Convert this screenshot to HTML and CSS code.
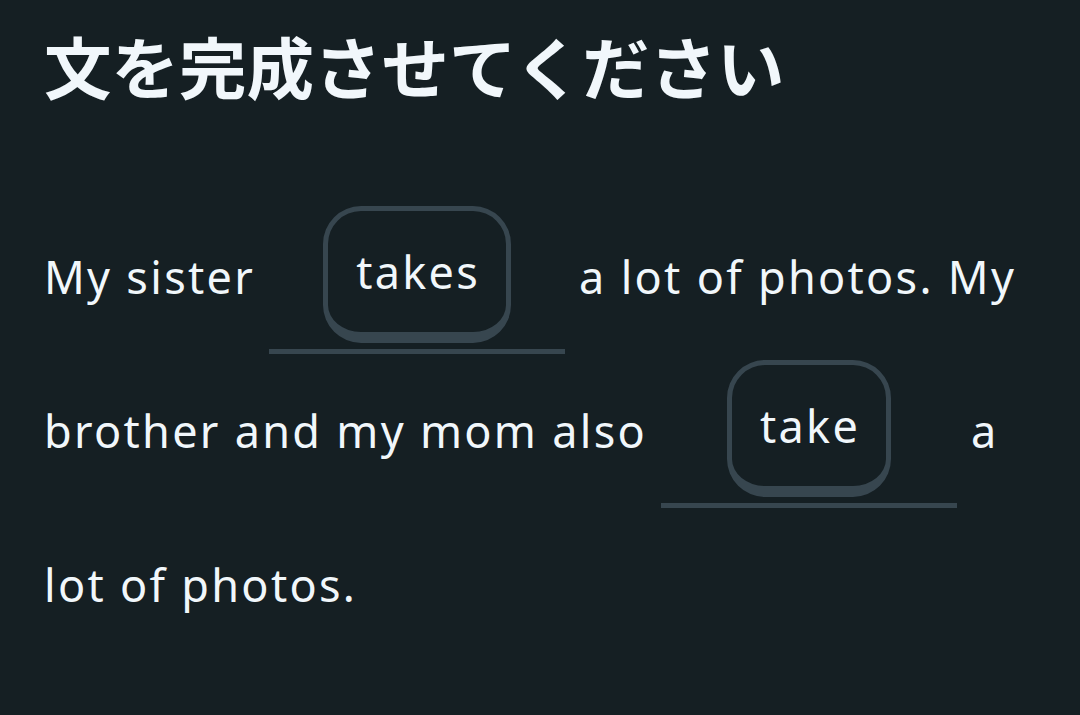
FILE: index.html
```html
<!DOCTYPE html>
<html lang="ja">
<head>
<meta charset="utf-8">
<link rel="stylesheet" href="styles.css">
</head>
<body>
<main class="page">
  <h1 class="title">文を完成させてください</h1>
  <p class="sentence">My sister <span class="blank"><span class="chip">takes</span></span> a lot of photos. My brother and my mom also <span class="blank"><span class="chip">take</span></span> a lot of photos.</p>
</main>
</body>
</html>
```
FILE: styles.css
```css
html, body {
  margin: 0;
  padding: 0;
  background: #151f23;
}
.page {
  width: 1080px;
  height: 715px;
  box-sizing: border-box;
  padding: 0 44px;
  color: #f1f7fb;
  font-family: "Noto Sans", "Noto Sans CJK JP", sans-serif;
  overflow: hidden;
}
.title {
  margin: 0;
  padding-top: 25px;
  height: 200px;
  box-sizing: border-box;
  font-family: "Noto Sans CJK JP", sans-serif;
  font-size: 67.5px;
  font-weight: 700;
  line-height: 80px;
  letter-spacing: 0;
}
.sentence {
  margin: 0;
  font-size: 45px;
  letter-spacing: 2.3px;
  line-height: 154px;
}
.blank {
  display: inline-flex;
  justify-content: center;
  align-items: flex-start;
  vertical-align: top;
  width: 296px;
  height: 154px;
  box-sizing: border-box;
  padding-top: 6px;
  border-bottom: 5px solid #37464f;
}
.chip {
  display: inline-flex;
  align-items: center;
  justify-content: center;
  height: 137px;
  box-sizing: border-box;
  padding: 0 26px 0 28px;
  border: 5px solid #37464f;
  border-bottom-width: 11px;
  border-radius: 38px;
  line-height: 1;
}
```
